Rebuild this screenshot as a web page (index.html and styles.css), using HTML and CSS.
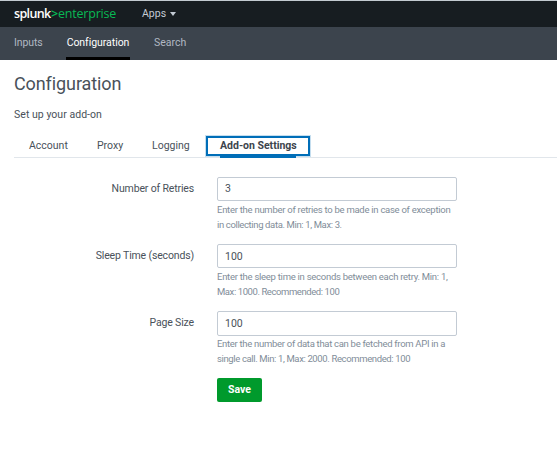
FILE: index.html
```html
<!DOCTYPE html>
<html lang="en">
<head>
<meta charset="utf-8">
<title>Configuration</title>
<link rel="stylesheet" href="styles.css">
</head>
<body>
<header class="topbar">
  <div class="logo"><span class="brand">splunk</span><span class="angle">&gt;</span><span class="edition">enterprise</span></div>
  <div class="apps"><span>Apps</span><svg width="6" height="4" viewBox="0 0 6 4"><path d="M0 0h6L3 4z" fill="currentColor"/></svg></div>
</header>
<nav class="nav">
  <a class="nav-inputs">Inputs</a>
  <a class="nav-config active">Configuration</a>
  <a class="nav-search">Search</a>
</nav>
<main>
  <h1>Configuration</h1>
  <p class="subtitle">Set up your add-on</p>
  <div class="tabs">
    <a class="tab tab-account">Account</a>
    <a class="tab tab-proxy">Proxy</a>
    <a class="tab tab-logging">Logging</a>
    <a class="tab selected"><span>Add-on Settings</span></a>
  </div>
  <form class="form">
    <div class="row">
      <label>Number of Retries</label>
      <div class="field">
        <div class="input">3</div>
        <div class="help">Enter the number of retries to be made in case of exception<br><span class="limits">in collecting data. Min: 1, Max: 3.</span></div>
      </div>
    </div>
    <div class="row">
      <label>Sleep Time (seconds)</label>
      <div class="field">
        <div class="input lower">100</div>
        <div class="help">Enter the sleep time in seconds between each retry. Min: 1,<br><span class="limits wide">Max: 1000. Recommended: 100</span></div>
      </div>
    </div>
    <div class="row">
      <label>Page Size</label>
      <div class="field">
        <div class="input lower tall">100</div>
        <div class="help"><span class="limits-half">Enter the number of data that can be fetched from API in a</span><br><span class="limits">single call. Min: 1, Max: 2000. Recommended: 100</span></div>
      </div>
    </div>
    <div class="save">Save</div>
  </form>
</main>
</body>
</html>
```
FILE: styles.css
```css
* { box-sizing: border-box; }
body {
  margin: 0;
  background: #fff;
  color: #49515a;
  font: 10.5px/16px Roboto, "Liberation Sans", sans-serif;
  white-space: nowrap;
}
.topbar {
  height: 27px;
  border-top: 1px solid #c3cbd0;
  background: #171d21;
  display: flex;
  align-items: center;
  padding-left: 14px;
}
.logo {
  width: 128px;
  display: flex;
  font: 12.5px/16px "Open Sans", sans-serif;
  color: #08b954;
}
.brand { width: 37px; color: #fff; font-weight: 600; letter-spacing: -0.65px; }
.angle { width: 7px; font-weight: 600; }
.edition { letter-spacing: -0.2px; }
.apps { display: flex; align-items: center; gap: 4px; color: #c3cbd4; }
.nav {
  height: 33px;
  background: #3c444d;
  display: flex;
  padding-left: 14px;
  gap: 25px;
  line-height: 32px;
  color: #b0b8c2;
}
.nav-inputs { width: 27px; letter-spacing: -0.1px; }
.nav-config { width: 64px; letter-spacing: -0.05px; }
.active { color: #fff; border-bottom: 3px solid #000; text-align: center; }
.nav-search { margin-left: -1px; }
main { padding-left: 14px; }
h1 { margin: 11px 0 0; font-size: 18px; line-height: 25px; font-weight: 400; letter-spacing: -0.1px; }
.subtitle { margin: 10px 0 13px; line-height: 17px; letter-spacing: 0.04px; }
.tabs {
  height: 22px;
  border-bottom: 1px solid #e1e6eb;
  display: flex;
  line-height: 20px;
}
.tab { padding-left: 15px; }
.tab-account { width: 68px; }
.tab-proxy { width: 55px; }
.tab-logging { width: 69px; }
.selected {
  height: 20px;
  width: 104px;
  padding: 0 12px;
  border: 2px solid #006eb8;
  box-shadow: 0 0 0 1px #c5deef;
  color: #3c444d;
  font-weight: 700;
  line-height: 16px;
}
.selected span { display: block; height: 20px; border-bottom: 3px solid #006eb8; }
.form { padding-top: 19px; }
.row { display: flex; height: 67px; }
label { width: 180px; text-align: right; line-height: 23px; margin-right: 23px; letter-spacing: -0.15px; }
.field { width: 240px; }
.input {
  height: 24px;
  border: 1px solid #c3cbd4;
  border-radius: 2px;
  padding-left: 7px;
  line-height: 21px;
}
.lower { line-height: 23px; }
.tall { height: 25px; margin-bottom: -1px; }
.help { padding-top: 1px; color: #818d99; font-size: 9.5px; line-height: 15px; letter-spacing: -0.27px; }
.limits { letter-spacing: -0.37px; }
.wide { letter-spacing: -0.42px; }
.limits-half { letter-spacing: -0.3px; }
.save {
  width: 45px;
  height: 24px;
  margin-left: 203px;
  border-radius: 2px;
  background: #009a2c;
  color: #fff;
  font-weight: 700;
  text-align: center;
  line-height: 24px;
}
```
